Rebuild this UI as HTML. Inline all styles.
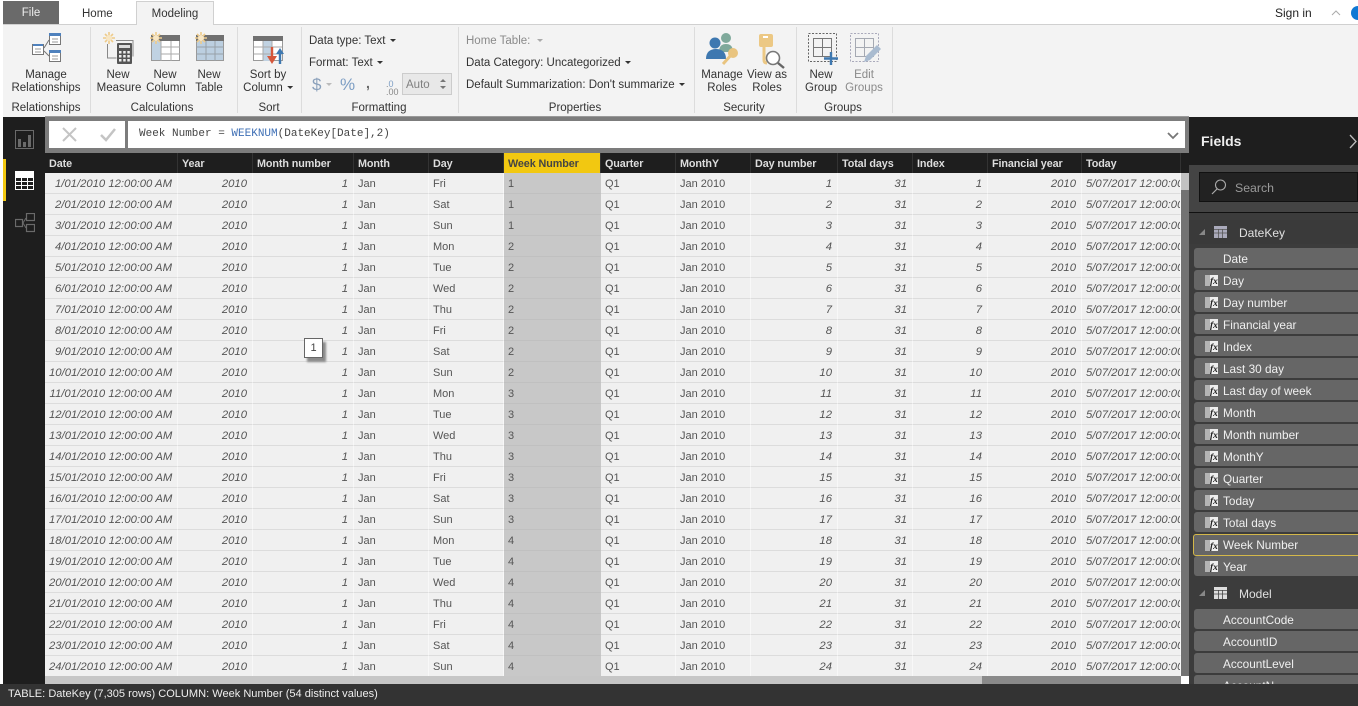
<!DOCTYPE html>
<html><head><meta charset="utf-8"><title>Power BI Desktop</title>
<style>
html,body{margin:0;padding:0;width:1358px;height:706px;overflow:hidden;background:#fff;font-family:"Liberation Sans",sans-serif}
*{box-sizing:border-box}
.a{position:absolute}
.t{position:absolute;font-size:11.5px;color:#333;white-space:nowrap;line-height:13px;margin-top:1px}
.c{text-align:center;transform:translateX(-50%)}
.g{color:#8a8a8a}
.sep{position:absolute;top:27px;width:1px;height:86px;background:#dcdcdc}
.car{display:inline-block;width:0;height:0;border:3px solid transparent;border-top:3px solid #333;border-bottom:0;margin-left:4px;vertical-align:2px}
table{border-collapse:separate;border-spacing:0;table-layout:fixed;width:1136px;position:absolute;left:45px}
td,th{padding:0 5px;overflow:hidden;white-space:nowrap}
#h{top:153px;height:20px;background:#1e1e1e}
#h th{height:20px;font-size:10.8px;color:#ddd;text-align:left;font-weight:bold;border-right:1px solid #333;padding:2px 4px 0;letter-spacing:-.1px}
#h th.w{background:#f2c811;color:#444;padding-left:4px}
#d{top:173px;background:#f0f0f0}
#d td{height:21px;font-size:11px;color:#555;border-bottom:1px solid #dcdcdc;border-right:1px solid #f8f8f8;background:#f0f0f0;padding:1px 5px 0 4px}
#d td:nth-child(1),#d td:nth-child(2),#d td:nth-child(3),#d td:nth-child(9),#d td:nth-child(10),#d td:nth-child(11),#d td:nth-child(12){text-align:right;font-style:italic;font-size:11.3px}
#d td:nth-child(13){font-style:italic;font-size:11.3px}
#d td:nth-child(6){background:#c8c8c8;border-bottom-color:#c0c0c0;border-right-color:#c8c8c8}
.f{position:absolute;left:1194px;width:170px;height:20px;background:#666;border-radius:3px;color:#f0f0f0;font-size:11.8px;line-height:22px;padding-left:29px;white-space:nowrap}
.f svg{position:absolute;left:11px;top:4px}
.fh{position:absolute;left:1189px;width:169px;height:24px;background:#3a3a3a;color:#e0e0e0;font-size:12px;line-height:26px}
</style></head>
<body>
<!-- top tabs -->
<div class="a" style="left:3px;top:1px;width:56px;height:23px;background:#6a6a6a;color:#eee;font-size:11.5px;line-height:25px;text-align:center">File</div>
<div class="t" style="left:82px;top:7px;color:#333">Home</div>
<div class="a" style="left:136px;top:1px;width:78px;height:24px;background:#f3f3f3;border:1px solid #d0d0d0;border-bottom:0;z-index:3;font-size:11.5px;color:#333;line-height:24px;text-align:center">Modeling</div>
<div class="t" style="left:1275px;top:6px;font-size:12px;color:#222">Sign in</div>
<svg class="a" style="left:1331px;top:9px" width="10" height="7"><path d="M1 6L5 2L9 6" fill="none" stroke="#aaa"/></svg>
<div class="a" style="left:1351px;top:6px;width:14px;height:14px;border-radius:7px;background:#0f78d4"></div>
<!-- ribbon -->
<div class="a" style="left:3px;top:24px;width:1355px;height:93px;background:#f3f3f3;border-top:1px solid #d0d0d0"></div>
<div class="sep" style="left:90px"></div><div class="sep" style="left:237px"></div><div class="sep" style="left:301px"></div><div class="sep" style="left:458px"></div><div class="sep" style="left:694px"></div><div class="sep" style="left:796px"></div><div class="sep" style="left:892px"></div>

<svg class="a" style="left:30px;top:32px" width="34" height="32">
<rect x="2.5" y="12.5" width="11" height="10" fill="#fff" stroke="#777"/><rect x="3" y="12" width="10" height="2" fill="#4f81bd"/>
<rect x="19.5" y="1.5" width="11" height="11" fill="#fff" stroke="#777"/><rect x="19" y="1" width="12" height="3" fill="#4f81bd"/>
<rect x="19.5" y="18.5" width="11" height="11" fill="#fff" stroke="#777"/><rect x="19" y="18" width="12" height="3" fill="#4f81bd"/>
<path d="M14 16L19 8M14 19L19 24" stroke="#777" fill="none"/>
<path d="M5 17h6M5 20h6M22 7h6M22 10h6M22 24h6M22 27h6" stroke="#999"/></svg>
<div class="t c" style="left:46px;top:68px">Manage</div><div class="t c" style="left:46px;top:81px">Relationships</div>
<div class="t c" style="left:46px;top:101px">Relationships</div>

<svg class="a" style="left:102px;top:31px" width="32" height="34">
<path d="M7 1v12M1 7h12M3 3l8 8M11 3l-8 8" stroke="#eecb8a" stroke-width="1.6"/><circle cx="7" cy="7" r="3" fill="#f7e6c4"/>
<path d="M5.500 13v14h9M14 9.500h17v16" fill="none" stroke="#888"/>
<rect x="15" y="12" width="15" height="21" rx="1" fill="#555"/><rect x="17" y="14" width="11" height="3" fill="#ddd"/>
<path d="M17 20h2.500v2.500H17zM21.200 20h2.500v2.500h-2.500zM25.300 20h2.500v2.500h-2.500zM17 24h2.500v2.500H17zM21.200 24h2.500v2.500h-2.500zM25.300 24h2.500v2.500h-2.500zM17 28h2.500v2.500H17zM21.200 28h2.500v2.500h-2.500zM25.300 28h2.500v2.500h-2.500z" fill="#eee"/></svg>
<div class="t c" style="left:118px;top:68px">New</div><div class="t c" style="left:119px;top:81px">Measure</div>

<svg class="a" style="left:149px;top:31px" width="32" height="31">
<rect x="2.500" y="4.500" width="28" height="25" fill="#fff" stroke="#999"/><rect x="2" y="4" width="29" height="6" fill="#707070"/><rect x="3" y="10" width="9" height="19" fill="#c0d2e2"/>
<path d="M12 10v20M22 10v20M12 16h19M12 23h19" stroke="#aaa"/>
<path d="M7 1v12M1 7h12M3 3l8 8M11 3l-8 8" stroke="#eecb8a" stroke-width="1.6"/><circle cx="7" cy="7" r="3" fill="#f7e6c4"/></svg>
<div class="t c" style="left:165px;top:68px">New</div><div class="t c" style="left:166px;top:81px">Column</div>

<svg class="a" style="left:194px;top:31px" width="32" height="31">
<rect x="2.500" y="4.500" width="27" height="25" fill="#bccfe0" stroke="#999"/><rect x="2" y="4" width="28" height="6" fill="#707070"/>
<path d="M12 10v20M21 10v20M2 16h28M2 23h28" stroke="#98a0a8"/>
<path d="M7 1v12M1 7h12M3 3l8 8M11 3l-8 8" stroke="#eecb8a" stroke-width="1.6"/><circle cx="7" cy="7" r="3" fill="#f7e6c4"/></svg>
<div class="t c" style="left:209px;top:68px">New</div><div class="t c" style="left:209px;top:81px">Table</div>

<div class="t c" style="left:162px;top:101px">Calculations</div>

<svg class="a" style="left:252px;top:35px" width="36" height="30">
<rect x="1.5" y="1.5" width="29" height="24" fill="#fff" stroke="#999"/><rect x="1" y="1" width="30" height="5" fill="#707070"/><rect x="11" y="6" width="9" height="20" fill="#c0d2e2"/>
<path d="M11 6v20M20 6v20M2 12h28M2 19h28" stroke="#aaa"/>
<path d="M20 12v12" stroke="#d5573b" stroke-width="2.400"/><path d="M15 21l5 8 5-8z" fill="#d5573b"/>
<path d="M28 29V17" stroke="#3e78b0" stroke-width="2.400"/><path d="M24 19l4-6 4 6z" fill="#3e78b0"/></svg>
<div class="t c" style="left:268px;top:68px">Sort by</div><div class="t c" style="left:268px;top:81px">Column<span class="car"></span></div>
<div class="t c" style="left:269px;top:101px">Sort</div>

<div class="t" style="left:309px;top:34px">Data type: Text<span class="car"></span></div>
<div class="t" style="left:309px;top:56px">Format: Text<span class="car"></span></div>
<div class="t" style="left:312px;top:75px;font-size:17px;line-height:18px;color:#8aa0bb">$</div>
<div class="a" style="left:326px;top:83px;width:0;height:0;border:3px solid transparent;border-top:3px solid #bbb;border-bottom:0"></div>
<div class="t" style="left:340px;top:75px;font-size:17px;line-height:18px;color:#7d9ec4">%</div>
<div class="t" style="left:366px;top:76px;font-size:14px;font-weight:bold;color:#666">,</div>
<div class="t" style="left:386px;top:79px;font-size:9px;color:#888;line-height:8px">.<span style="color:#7d9ec4">0</span><br>.00</div>
<div class="a" style="left:402px;top:73px;width:50px;height:22px;background:#e8e8e8;border:1px solid #ccc;color:#808080;font-size:11.5px;line-height:22px;padding-left:3px">Auto</div>
<svg class="a" style="left:438px;top:77px" width="10" height="14"><path d="M2 5l3-3 3 3z M2 9l3 3 3-3z" fill="#777"/></svg>
<div class="t c" style="left:379px;top:101px">Formatting</div>

<div class="t g" style="left:466px;top:34px">Home Table:<span class="car" style="border-top-color:#aaa;margin-left:7px"></span></div>
<div class="t" style="left:466px;top:56px">Data Category: Uncategorized<span class="car"></span></div>
<div class="t" style="left:466px;top:78px">Default Summarization: Don't summarize<span class="car"></span></div>
<div class="t c" style="left:575px;top:101px">Properties</div>

<svg class="a" style="left:705px;top:32px" width="34" height="36">
<circle cx="21" cy="6" r="5" fill="#7fa99b"/><path d="M14 20c0-6 3-8 7-8s7 2 7 8z" fill="#7fa99b"/>
<circle cx="10" cy="11" r="5.500" fill="#3e78b0"/><path d="M1 27c0-7 4-10 10-10s10 3 10 10z" fill="#3e78b0"/>
<path d="M18 32l9-10" stroke="#e9c47f" stroke-width="3"/><circle cx="28" cy="21" r="5" fill="#e9c47f"/></svg>
<div class="t c" style="left:722px;top:68px">Manage</div><div class="t c" style="left:722px;top:81px">Roles</div>

<svg class="a" style="left:757px;top:32px" width="30" height="38">
<rect x="2" y="2" width="14" height="13" rx="2" fill="#ecc884"/><rect x="6" y="4" width="5" height="2" fill="#fff"/>
<path d="M7 15v13c0 2 1 3 3 3" fill="none" stroke="#ecc884" stroke-width="3"/>
<circle cx="16" cy="26" r="6.500" fill="#fff" stroke="#777" stroke-width="1.600"/><path d="M21 31l6 5" stroke="#666" stroke-width="2.400"/></svg>
<div class="t c" style="left:767px;top:68px">View as</div><div class="t c" style="left:767px;top:81px">Roles</div>

<svg class="a" style="left:807px;top:32px" width="34" height="33">
<rect x="1.500" y="1.500" width="28" height="28" fill="none" stroke="#666" stroke-dasharray="2 1.500"/>
<rect x="6.500" y="6.500" width="18" height="18" fill="none" stroke="#777"/><path d="M15.500 6v18M6 15.500h18" stroke="#777"/>
<path d="M24 20v13M17 26.500h14" stroke="#3e78b0" stroke-width="2.400"/></svg>
<div class="t c" style="left:821px;top:68px">New</div><div class="t c" style="left:821px;top:81px">Group</div>

<svg class="a" style="left:849px;top:32px" width="32" height="33">
<rect x="1.500" y="1.500" width="28" height="28" fill="none" stroke="#aab" stroke-dasharray="2 1.500"/>
<rect x="6.500" y="6.500" width="18" height="18" fill="none" stroke="#a5a9b2"/><path d="M15.500 6v18M6 15.500h18" stroke="#a5a9b2"/>
<path d="M15 30l2-6 11-11 4 4-11 11z" fill="#a9bbd0"/></svg>
<div class="t c g" style="left:864px;top:68px">Edit</div><div class="t c g" style="left:864px;top:81px">Groups</div>
<div class="t c" style="left:744px;top:101px">Security</div>
<div class="t c" style="left:843px;top:101px">Groups</div>

<!-- left strip & nav -->
<div class="a" style="left:3px;top:117px;width:42px;height:567px;background:#1e1e1e"></div>
<div class="a" style="left:3px;top:159px;width:3px;height:42px;background:#f2c811"></div>
<svg class="a" style="left:15px;top:130px" width="20" height="19"><rect x=".5" y=".5" width="18" height="18" fill="none" stroke="#6a6a6a"/><path d="M3 17V9h3v8zM8 17v-5h3v5zM13 17V5h3v12z" fill="#6a6a6a"/></svg>
<svg class="a" style="left:15px;top:171px" width="20" height="20"><rect x="0" y="0" width="19" height="19" fill="#fff"/><path d="M1 6h17v12H1z" fill="#1e1e1e"/><path d="M1 6.500h17M1 10.500h17M1 14.500h17M1 18.500h17M.5 6v13M6.500 6v13M12.500 6v13M18.500 6v13" stroke="#fff"/></svg>
<svg class="a" style="left:15px;top:213px" width="20" height="20"><rect x=".5" y="6.500" width="7" height="7" fill="none" stroke="#6a6a6a" stroke-width="1.200"/><rect x="11.500" y=".5" width="8" height="7" fill="none" stroke="#6a6a6a" stroke-width="1.200"/><rect x="11.500" y="11.500" width="8" height="7" fill="none" stroke="#6a6a6a" stroke-width="1.200"/><path d="M8 10l3-5M8 10l3 5" stroke="#6a6a6a" fill="none"/></svg>

<!-- formula bar -->
<div class="a" style="left:45px;top:116px;width:1144px;height:37px;background:#7c7c7c;border-top:1px solid #999"></div>
<div class="a" style="left:49px;top:121px;width:76px;height:27px;background:#fff"></div>
<svg class="a" style="left:60px;top:125px" width="60" height="20"><path d="M3 3l13 13M16 3L3 16" stroke="#c4c4c4" stroke-width="2"/><path d="M41 10l5 5 9-11" fill="none" stroke="#c4c4c4" stroke-width="2.500"/></svg>
<div class="a" style="left:128px;top:121px;width:1057px;height:27px;background:#fff;font-family:'Liberation Mono',monospace;font-size:11px;line-height:26px;padding-left:11px;color:#444;white-space:pre">Week Number = <span style="color:#3e6fb5">WEEKNUM</span>(DateKey[Date],2)</div>
<svg class="a" style="left:1166px;top:131px" width="14" height="10"><path d="M2 2l5 5 5-5" fill="none" stroke="#777" stroke-width="1.800"/></svg>

<!-- table -->
<table id="h"><colgroup><col style="width:133px"><col style="width:75px"><col style="width:101px"><col style="width:75px"><col style="width:75px"><col style="width:97px"><col style="width:75px"><col style="width:75px"><col style="width:87px"><col style="width:75px"><col style="width:75px"><col style="width:94px"><col style="width:99px"></colgroup>
<tr><th>Date</th><th>Year</th><th>Month number</th><th>Month</th><th>Day</th><th class="w">Week Number</th><th>Quarter</th><th>MonthY</th><th>Day number</th><th>Total days</th><th>Index</th><th>Financial year</th><th>Today</th></tr></table>
<table id="d"><colgroup><col style="width:133px"><col style="width:75px"><col style="width:101px"><col style="width:75px"><col style="width:75px"><col style="width:97px"><col style="width:75px"><col style="width:75px"><col style="width:87px"><col style="width:75px"><col style="width:75px"><col style="width:94px"><col style="width:99px"></colgroup>
<tr><td>1/01/2010 12:00:00 AM</td><td>2010</td><td>1</td><td>Jan</td><td>Fri</td><td>1</td><td>Q1</td><td>Jan 2010</td><td>1</td><td>31</td><td>1</td><td>2010</td><td>5/07/2017 12:00:00 AM</td></tr>
<tr><td>2/01/2010 12:00:00 AM</td><td>2010</td><td>1</td><td>Jan</td><td>Sat</td><td>1</td><td>Q1</td><td>Jan 2010</td><td>2</td><td>31</td><td>2</td><td>2010</td><td>5/07/2017 12:00:00 AM</td></tr>
<tr><td>3/01/2010 12:00:00 AM</td><td>2010</td><td>1</td><td>Jan</td><td>Sun</td><td>1</td><td>Q1</td><td>Jan 2010</td><td>3</td><td>31</td><td>3</td><td>2010</td><td>5/07/2017 12:00:00 AM</td></tr>
<tr><td>4/01/2010 12:00:00 AM</td><td>2010</td><td>1</td><td>Jan</td><td>Mon</td><td>2</td><td>Q1</td><td>Jan 2010</td><td>4</td><td>31</td><td>4</td><td>2010</td><td>5/07/2017 12:00:00 AM</td></tr>
<tr><td>5/01/2010 12:00:00 AM</td><td>2010</td><td>1</td><td>Jan</td><td>Tue</td><td>2</td><td>Q1</td><td>Jan 2010</td><td>5</td><td>31</td><td>5</td><td>2010</td><td>5/07/2017 12:00:00 AM</td></tr>
<tr><td>6/01/2010 12:00:00 AM</td><td>2010</td><td>1</td><td>Jan</td><td>Wed</td><td>2</td><td>Q1</td><td>Jan 2010</td><td>6</td><td>31</td><td>6</td><td>2010</td><td>5/07/2017 12:00:00 AM</td></tr>
<tr><td>7/01/2010 12:00:00 AM</td><td>2010</td><td>1</td><td>Jan</td><td>Thu</td><td>2</td><td>Q1</td><td>Jan 2010</td><td>7</td><td>31</td><td>7</td><td>2010</td><td>5/07/2017 12:00:00 AM</td></tr>
<tr><td>8/01/2010 12:00:00 AM</td><td>2010</td><td>1</td><td>Jan</td><td>Fri</td><td>2</td><td>Q1</td><td>Jan 2010</td><td>8</td><td>31</td><td>8</td><td>2010</td><td>5/07/2017 12:00:00 AM</td></tr>
<tr><td>9/01/2010 12:00:00 AM</td><td>2010</td><td>1</td><td>Jan</td><td>Sat</td><td>2</td><td>Q1</td><td>Jan 2010</td><td>9</td><td>31</td><td>9</td><td>2010</td><td>5/07/2017 12:00:00 AM</td></tr>
<tr><td>10/01/2010 12:00:00 AM</td><td>2010</td><td>1</td><td>Jan</td><td>Sun</td><td>2</td><td>Q1</td><td>Jan 2010</td><td>10</td><td>31</td><td>10</td><td>2010</td><td>5/07/2017 12:00:00 AM</td></tr>
<tr><td>11/01/2010 12:00:00 AM</td><td>2010</td><td>1</td><td>Jan</td><td>Mon</td><td>3</td><td>Q1</td><td>Jan 2010</td><td>11</td><td>31</td><td>11</td><td>2010</td><td>5/07/2017 12:00:00 AM</td></tr>
<tr><td>12/01/2010 12:00:00 AM</td><td>2010</td><td>1</td><td>Jan</td><td>Tue</td><td>3</td><td>Q1</td><td>Jan 2010</td><td>12</td><td>31</td><td>12</td><td>2010</td><td>5/07/2017 12:00:00 AM</td></tr>
<tr><td>13/01/2010 12:00:00 AM</td><td>2010</td><td>1</td><td>Jan</td><td>Wed</td><td>3</td><td>Q1</td><td>Jan 2010</td><td>13</td><td>31</td><td>13</td><td>2010</td><td>5/07/2017 12:00:00 AM</td></tr>
<tr><td>14/01/2010 12:00:00 AM</td><td>2010</td><td>1</td><td>Jan</td><td>Thu</td><td>3</td><td>Q1</td><td>Jan 2010</td><td>14</td><td>31</td><td>14</td><td>2010</td><td>5/07/2017 12:00:00 AM</td></tr>
<tr><td>15/01/2010 12:00:00 AM</td><td>2010</td><td>1</td><td>Jan</td><td>Fri</td><td>3</td><td>Q1</td><td>Jan 2010</td><td>15</td><td>31</td><td>15</td><td>2010</td><td>5/07/2017 12:00:00 AM</td></tr>
<tr><td>16/01/2010 12:00:00 AM</td><td>2010</td><td>1</td><td>Jan</td><td>Sat</td><td>3</td><td>Q1</td><td>Jan 2010</td><td>16</td><td>31</td><td>16</td><td>2010</td><td>5/07/2017 12:00:00 AM</td></tr>
<tr><td>17/01/2010 12:00:00 AM</td><td>2010</td><td>1</td><td>Jan</td><td>Sun</td><td>3</td><td>Q1</td><td>Jan 2010</td><td>17</td><td>31</td><td>17</td><td>2010</td><td>5/07/2017 12:00:00 AM</td></tr>
<tr><td>18/01/2010 12:00:00 AM</td><td>2010</td><td>1</td><td>Jan</td><td>Mon</td><td>4</td><td>Q1</td><td>Jan 2010</td><td>18</td><td>31</td><td>18</td><td>2010</td><td>5/07/2017 12:00:00 AM</td></tr>
<tr><td>19/01/2010 12:00:00 AM</td><td>2010</td><td>1</td><td>Jan</td><td>Tue</td><td>4</td><td>Q1</td><td>Jan 2010</td><td>19</td><td>31</td><td>19</td><td>2010</td><td>5/07/2017 12:00:00 AM</td></tr>
<tr><td>20/01/2010 12:00:00 AM</td><td>2010</td><td>1</td><td>Jan</td><td>Wed</td><td>4</td><td>Q1</td><td>Jan 2010</td><td>20</td><td>31</td><td>20</td><td>2010</td><td>5/07/2017 12:00:00 AM</td></tr>
<tr><td>21/01/2010 12:00:00 AM</td><td>2010</td><td>1</td><td>Jan</td><td>Thu</td><td>4</td><td>Q1</td><td>Jan 2010</td><td>21</td><td>31</td><td>21</td><td>2010</td><td>5/07/2017 12:00:00 AM</td></tr>
<tr><td>22/01/2010 12:00:00 AM</td><td>2010</td><td>1</td><td>Jan</td><td>Fri</td><td>4</td><td>Q1</td><td>Jan 2010</td><td>22</td><td>31</td><td>22</td><td>2010</td><td>5/07/2017 12:00:00 AM</td></tr>
<tr><td>23/01/2010 12:00:00 AM</td><td>2010</td><td>1</td><td>Jan</td><td>Sat</td><td>4</td><td>Q1</td><td>Jan 2010</td><td>23</td><td>31</td><td>23</td><td>2010</td><td>5/07/2017 12:00:00 AM</td></tr>
<tr><td>24/01/2010 12:00:00 AM</td><td>2010</td><td>1</td><td>Jan</td><td>Sun</td><td>4</td><td>Q1</td><td>Jan 2010</td><td>24</td><td>31</td><td>24</td><td>2010</td><td>5/07/2017 12:00:00 AM</td></tr>
</table>
<!-- tooltip -->
<div class="a" style="left:304px;top:338px;width:19px;height:20px;background:#fff;border:1px solid #666;font-size:11px;line-height:19px;text-align:center;color:#444;box-shadow:3px 4px 2px #8a8a8a">1</div>
<!-- scrollbars -->
<div class="a" style="left:45px;top:676px;width:1136px;height:8px;background:#c6c6c6"></div>
<div class="a" style="left:982px;top:676px;width:199px;height:8px;background:#8a8a8a"></div>
<div class="a" style="left:1181px;top:153px;width:8px;height:20px;background:#1e1e1e"></div>
<div class="a" style="left:1181px;top:173px;width:8px;height:503px;background:#737373"></div>
<div class="a" style="left:1181px;top:173px;width:8px;height:17px;background:#c2c2c2"></div>
<div class="a" style="left:1181px;top:676px;width:8px;height:8px;background:#fff"></div>

<!-- fields panel -->
<div class="a" style="left:1189px;top:117px;width:169px;height:48px;background:#1e1e1e"></div>
<div class="a" style="left:1201px;top:133px;color:#eee;font-size:14px;font-weight:bold;line-height:16px">Fields</div>
<svg class="a" style="left:1349px;top:134px" width="9" height="15"><path d="M1 1l6 6.500-6 6.500" fill="none" stroke="#bbb" stroke-width="1.300"/></svg>
<div class="a" style="left:1189px;top:165px;width:169px;height:47px;background:#444"></div>
<div class="a" style="left:1189px;top:212px;width:169px;height:472px;background:#3c3c3c"></div>
<div class="a" style="left:1199px;top:172px;width:159px;height:30px;background:#222;border:1px solid #111"></div>
<svg class="a" style="left:1210px;top:178px" width="18" height="18"><circle cx="10.500" cy="7" r="5" fill="none" stroke="#aaa" stroke-width="1.100"/><path d="M7 11l-5 5" stroke="#aaa" stroke-width="1.200"/></svg>
<div class="a" style="left:1235px;top:181px;color:#9a9a9a;font-size:12.300px;line-height:14px">Search</div>
<div class="a" style="left:1189px;top:212px;width:169px;height:1px;background:#111"></div>
<div class="fh" style="top:220px"><span class="a" style="left:50px">DateKey</span></div>
<svg class="a" style="left:1198px;top:228px" width="8" height="8"><path d="M7 1v6H1z" fill="#888"/></svg>
<svg class="a" style="left:1214px;top:226px" width="13" height="12"><rect width="13" height="12" fill="#aab"/><path d="M0 3.500h13M0 7h13M4.500 3v9M8.500 3v9" stroke="#555" stroke-width=".8"/></svg>

<div class="f" style="top:248px">Date</div>
<div class="f" style="top:270px"><svg width="13" height="12"><rect width="13" height="11" y="1" fill="#b4b4b4"/><rect x="5" y="1" width="8" height="11" fill="#eee"/><text x="5" y="10" font-size="9.500" font-style="italic" font-weight="bold" fill="#222" font-family="Liberation Serif,serif">fx</text></svg>Day</div>
<div class="f" style="top:292px"><svg width="13" height="12"><rect width="13" height="11" y="1" fill="#b4b4b4"/><rect x="5" y="1" width="8" height="11" fill="#eee"/><text x="5" y="10" font-size="9.500" font-style="italic" font-weight="bold" fill="#222" font-family="Liberation Serif,serif">fx</text></svg>Day number</div>
<div class="f" style="top:314px"><svg width="13" height="12"><rect width="13" height="11" y="1" fill="#b4b4b4"/><rect x="5" y="1" width="8" height="11" fill="#eee"/><text x="5" y="10" font-size="9.500" font-style="italic" font-weight="bold" fill="#222" font-family="Liberation Serif,serif">fx</text></svg>Financial year</div>
<div class="f" style="top:336px"><svg width="13" height="12"><rect width="13" height="11" y="1" fill="#b4b4b4"/><rect x="5" y="1" width="8" height="11" fill="#eee"/><text x="5" y="10" font-size="9.500" font-style="italic" font-weight="bold" fill="#222" font-family="Liberation Serif,serif">fx</text></svg>Index</div>
<div class="f" style="top:358px"><svg width="13" height="12"><rect width="13" height="11" y="1" fill="#b4b4b4"/><rect x="5" y="1" width="8" height="11" fill="#eee"/><text x="5" y="10" font-size="9.500" font-style="italic" font-weight="bold" fill="#222" font-family="Liberation Serif,serif">fx</text></svg>Last 30 day</div>
<div class="f" style="top:380px"><svg width="13" height="12"><rect width="13" height="11" y="1" fill="#b4b4b4"/><rect x="5" y="1" width="8" height="11" fill="#eee"/><text x="5" y="10" font-size="9.500" font-style="italic" font-weight="bold" fill="#222" font-family="Liberation Serif,serif">fx</text></svg>Last day of week</div>
<div class="f" style="top:402px"><svg width="13" height="12"><rect width="13" height="11" y="1" fill="#b4b4b4"/><rect x="5" y="1" width="8" height="11" fill="#eee"/><text x="5" y="10" font-size="9.500" font-style="italic" font-weight="bold" fill="#222" font-family="Liberation Serif,serif">fx</text></svg>Month</div>
<div class="f" style="top:424px"><svg width="13" height="12"><rect width="13" height="11" y="1" fill="#b4b4b4"/><rect x="5" y="1" width="8" height="11" fill="#eee"/><text x="5" y="10" font-size="9.500" font-style="italic" font-weight="bold" fill="#222" font-family="Liberation Serif,serif">fx</text></svg>Month number</div>
<div class="f" style="top:446px"><svg width="13" height="12"><rect width="13" height="11" y="1" fill="#b4b4b4"/><rect x="5" y="1" width="8" height="11" fill="#eee"/><text x="5" y="10" font-size="9.500" font-style="italic" font-weight="bold" fill="#222" font-family="Liberation Serif,serif">fx</text></svg>MonthY</div>
<div class="f" style="top:468px"><svg width="13" height="12"><rect width="13" height="11" y="1" fill="#b4b4b4"/><rect x="5" y="1" width="8" height="11" fill="#eee"/><text x="5" y="10" font-size="9.500" font-style="italic" font-weight="bold" fill="#222" font-family="Liberation Serif,serif">fx</text></svg>Quarter</div>
<div class="f" style="top:490px"><svg width="13" height="12"><rect width="13" height="11" y="1" fill="#b4b4b4"/><rect x="5" y="1" width="8" height="11" fill="#eee"/><text x="5" y="10" font-size="9.500" font-style="italic" font-weight="bold" fill="#222" font-family="Liberation Serif,serif">fx</text></svg>Today</div>
<div class="f" style="top:512px"><svg width="13" height="12"><rect width="13" height="11" y="1" fill="#b4b4b4"/><rect x="5" y="1" width="8" height="11" fill="#eee"/><text x="5" y="10" font-size="9.500" font-style="italic" font-weight="bold" fill="#222" font-family="Liberation Serif,serif">fx</text></svg>Total days</div>
<div class="f" style="top:534px;left:1193px;height:22px;border:1px solid #d4b84a;line-height:21px;padding-left:29px"><svg style="left:11px" width="13" height="12"><rect width="13" height="11" y="1" fill="#b4b4b4"/><rect x="5" y="1" width="8" height="11" fill="#eee"/><text x="5" y="10" font-size="9.500" font-style="italic" font-weight="bold" fill="#222" font-family="Liberation Serif,serif">fx</text></svg>Week Number</div>
<div class="f" style="top:556px"><svg width="13" height="12"><rect width="13" height="11" y="1" fill="#b4b4b4"/><rect x="5" y="1" width="8" height="11" fill="#eee"/><text x="5" y="10" font-size="9.500" font-style="italic" font-weight="bold" fill="#222" font-family="Liberation Serif,serif">fx</text></svg>Year</div>

<div class="a" style="left:1239px;top:587px;color:#e0e0e0;font-size:12px;line-height:15px">Model</div>
<svg class="a" style="left:1198px;top:589px" width="8" height="8"><path d="M7 1v6H1z" fill="#888"/></svg>
<svg class="a" style="left:1214px;top:587px" width="13" height="12"><rect width="13" height="12" fill="#ddd"/><path d="M0 3.500h13M0 7h13M4.500 3v9M8.500 3v9" stroke="#444" stroke-width=".8"/></svg>
<div class="f" style="top:609px">AccountCode</div>
<div class="f" style="top:631px">AccountID</div>
<div class="f" style="top:653px">AccountLevel</div>
<div class="f" style="top:675px">AccountN</div>

<!-- status bar -->
<div class="a" style="left:0;top:684px;width:1358px;height:22px;background:#333;color:#eee;font-size:11.050px;line-height:21px;padding-left:8px;white-space:nowrap">TABLE: DateKey (7,305 rows) COLUMN: Week Number (54 distinct values)</div>
</body></html>
